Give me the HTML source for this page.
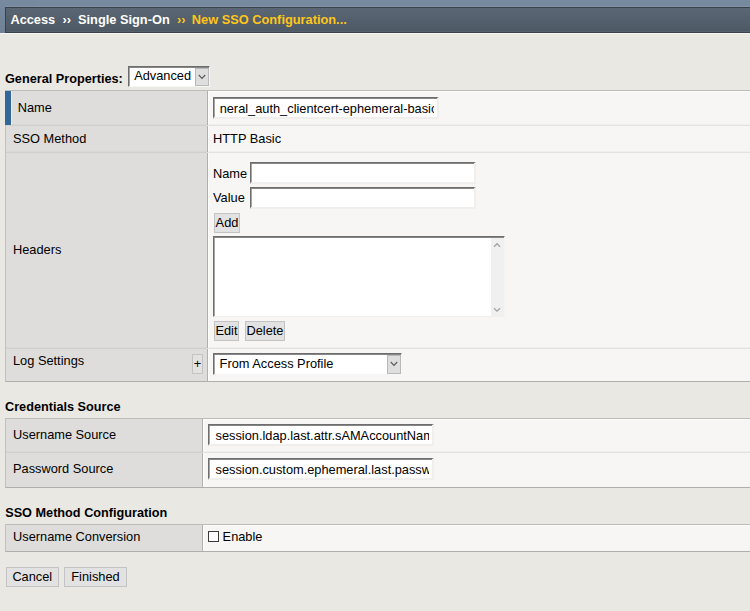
<!DOCTYPE html>
<html lang="en">
<head>
<meta charset="utf-8">
<title>New SSO Configuration</title>
<style>
html,body{margin:0;padding:0;}
body{width:750px;height:611px;overflow:hidden;background:#eae8e3;position:relative;
  font-family:"Liberation Sans",Arial,sans-serif;font-size:12.8px;color:#000;}
.abs{position:absolute;white-space:nowrap;line-height:16px;}
.b{font-weight:bold;font-size:12.7px;}
/* top band */
#band{position:absolute;left:0;top:0;width:750px;height:33px;
  background:repeating-linear-gradient(135deg,rgba(255,255,255,0.022) 0,rgba(255,255,255,0.022) 1.4px,rgba(0,0,0,0) 1.4px,rgba(0,0,0,0) 2.83px),linear-gradient(#76899e,#6e8095);}
#crumb{position:absolute;left:5px;top:7px;width:760px;height:24px;border:1px solid #3a434c;
  box-shadow:0 -1px 0 rgba(255,255,255,0.09),inset 0 -1px 0 rgba(255,255,255,0.05);
  background:repeating-linear-gradient(135deg,rgba(255,255,255,0.02) 0,rgba(255,255,255,0.02) 1.4px,rgba(0,0,0,0) 1.4px,rgba(0,0,0,0) 2.83px),linear-gradient(#596572,#4b5763);}
#bandline{position:absolute;left:0;top:33px;width:750px;height:1px;background:#f6f5f2;}
.t{color:#fff;font-weight:bold;}
.y{color:#ffc61a;font-weight:bold;}
/* tables */
.tbl{position:absolute;left:5px;width:760px;border-left:1px solid #c2c2c0;border-top:1px solid #bcbcba;border-bottom:1px solid #aeaeac;box-sizing:border-box;background:#f7f6f4;}
.lab{position:absolute;left:0;background:#dedddb;}
.div{position:absolute;height:1px;left:0;width:760px;background:linear-gradient(90deg,#d0cfcc 0,#d0cfcc var(--lw,201px),#e3e2e0 var(--lw,201px));box-shadow:0 -1px 0 rgba(128,128,120,0.06);}
.vline{position:absolute;width:1px;background:#b0b0ae;}
.wline{position:absolute;background:#fdfdfc;}
/* fake form controls */
.inp{position:absolute;box-sizing:border-box;background:#fff;border-style:solid;border-width:1px 2px 2px 1px;border-color:#6d6d6d #f0efed #f0efed #6d6d6d;box-shadow:inset 0 1px 0 #868686,inset 1px 0 0 #a6a6a6;overflow:hidden;}
.inp .clip{position:absolute;left:6px;right:3px;top:1px;bottom:0;overflow:hidden;}
.inp span{position:absolute;white-space:nowrap;line-height:16px;top:1.5px;}
.btn{position:absolute;box-sizing:border-box;background:#e2e2e2;border:1px solid #c3c3c3;text-align:center;white-space:nowrap;}
.sel{position:absolute;box-sizing:border-box;background:#fff;border-style:solid;border-width:1px 1px 1px 1px;border-color:#6d6d6d #f6f6f5 #f6f6f5 #6d6d6d;box-shadow:inset 0 1px 0 #868686,inset 1px 0 0 #a6a6a6;}
.sel .arrow{position:absolute;right:0;top:1px;bottom:0;width:14px;background:#dedede;border:1px solid #b9b9b9;box-sizing:border-box;}
.sel .arrow svg{position:absolute;left:0;top:0;}
</style>
</head>
<body>
<div id="band"></div>
<div id="crumb"></div>
<div id="bandline"></div>
<div class="abs t" style="left:10.4px;top:12px;">Access</div>
<div class="abs t" style="left:62.4px;top:12px;">››</div>
<div class="abs t" style="left:78px;top:12px;">Single Sign-On</div>
<div class="abs y" style="left:177px;top:12px;">››</div>
<div class="abs y" style="left:191.8px;top:12px;">New SSO Configuration...</div>

<div class="abs b" style="left:5px;top:71px;">General Properties:</div>
<div class="sel" style="left:128px;top:66px;width:82px;height:21px;">
  <div class="abs" style="left:5.2px;top:1px;">Advanced</div>
  <div class="arrow"><svg width="12" height="18" viewBox="0 0 12 18"><path d="M2.8 6 L6 9.3 L9.2 6" fill="none" stroke="#5a5a5a" stroke-width="1.15"/></svg></div>
</div>

<!-- table 1 -->
<div class="tbl" style="top:90px;height:292px;">
  <div class="lab" style="top:0;width:201px;height:290px;"></div>
  <div class="vline" style="left:201px;top:0;height:290px;"></div>
  <div class="wline" style="left:202px;top:0;width:1px;height:290px;"></div>
  <div class="wline" style="left:202px;top:0;width:560px;height:1px;"></div>
  <div style="position:absolute;left:-1px;top:0;width:5.6px;height:34px;background:#336699;"></div><div style="position:absolute;left:4.6px;top:0;width:1px;height:34px;background:#ecebe8;"></div>
  <div class="div" style="top:34px;"></div>
  <div class="div" style="top:61px;"></div>
  <div class="div" style="top:257px;"></div>
</div>
<div class="abs" style="left:17.7px;top:100px;">Name</div>
<div class="inp" style="left:213px;top:97px;width:226px;height:22px;"><div class="clip"><span style="left:-14.6px;">general_auth_clientcert-ephemeral-basic</span></div></div>
<div class="abs" style="left:13px;top:131px;">SSO Method</div>
<div class="abs" style="left:213px;top:131px;">HTTP Basic</div>

<div class="abs" style="left:13px;top:242px;">Headers</div>
<div class="abs" style="left:213px;top:166px;">Name</div>
<div class="inp" style="left:250px;top:162px;width:226px;height:22px;"></div>
<div class="abs" style="left:213px;top:190px;">Value</div>
<div class="inp" style="left:250px;top:187px;width:226px;height:22px;"></div>
<div class="btn" style="left:214px;top:213px;width:26px;height:19.5px;line-height:17px;">Add</div>
<div class="inp" style="left:213px;top:236px;width:292px;height:81px;border-right-width:1px;border-bottom-width:1px;border-right-color:#f5f4f2;">
  <div style="position:absolute;right:0;top:1px;width:12.6px;height:78px;background:#f0f0f0;">
    <svg width="13" height="78" viewBox="0 0 13 78" style="position:absolute;left:0;top:0"><path d="M3 8.7 L6 5.7 L9 8.7" fill="none" stroke="#a3a3a3" stroke-width="1.3"/><path d="M3 70.2 L6 73.2 L9 70.2" fill="none" stroke="#a3a3a3" stroke-width="1.3"/></svg>
  </div>
</div>
<div class="btn" style="left:214px;top:321px;width:25px;height:20px;line-height:17px;">Edit</div>
<div class="btn" style="left:245px;top:321px;width:40px;height:20px;line-height:17px;">Delete</div>

<div class="abs" style="left:13px;top:353px;">Log Settings</div>
<div class="btn" style="left:192.4px;top:354px;width:10.6px;height:20px;line-height:18px;text-indent:-0.5px;overflow:hidden;">+</div>
<div class="sel" style="left:213px;top:353px;width:189px;height:21.5px;">
  <div class="abs" style="left:5.6px;top:2px;">From Access Profile</div>
  <div class="arrow"><svg width="12" height="18" viewBox="0 0 12 18"><path d="M2.8 6 L6 9.3 L9.2 6" fill="none" stroke="#5a5a5a" stroke-width="1.15"/></svg></div>
</div>

<!-- table 2 -->
<div class="abs b" style="left:5px;top:399px;">Credentials Source</div>
<div class="tbl" style="top:418px;height:70px;">
  <div class="lab" style="top:0;width:196px;height:68px;"></div>
  <div class="vline" style="left:196px;top:0;height:68px;"></div>
  <div class="wline" style="left:197px;top:0;width:1px;height:68px;"></div>
  <div class="wline" style="left:197px;top:0;width:560px;height:1px;"></div>
  <div class="div" style="top:33px;--lw:196px;"></div>
</div>
<div class="abs" style="left:13px;top:427px;">Username Source</div>
<div class="inp" style="left:208px;top:424px;width:226px;height:22px;"><div class="clip"><span style="left:0.5px;">session.ldap.last.attr.sAMAccountName</span></div></div>
<div class="abs" style="left:13px;top:461px;">Password Source</div>
<div class="inp" style="left:208px;top:458px;width:226px;height:22px;"><div class="clip"><span style="left:0.5px;">session.custom.ephemeral.last.password</span></div></div>

<!-- table 3 -->
<div class="abs b" style="left:5.2px;top:505px;">SSO Method Configuration</div>
<div class="tbl" style="top:524px;height:28px;">
  <div class="lab" style="top:0;width:196px;height:26px;"></div>
  <div class="vline" style="left:196px;top:0;height:26px;"></div>
  <div class="wline" style="left:197px;top:0;width:1px;height:26px;"></div>
  <div class="wline" style="left:197px;top:0;width:560px;height:1px;"></div>
</div>
<div class="abs" style="left:13px;top:529px;">Username Conversion</div>
<div style="position:absolute;left:208px;top:531px;width:11px;height:11px;box-sizing:border-box;border:1px solid #3b3b3b;background:#fff;"></div>
<div class="abs" style="left:222.6px;top:529px;">Enable</div>

<div class="btn" style="left:6px;top:567px;width:52.6px;height:19.5px;line-height:17px;">Cancel</div>
<div class="btn" style="left:64.3px;top:567px;width:62.4px;height:19.5px;line-height:17px;">Finished</div>
</body>
</html>
